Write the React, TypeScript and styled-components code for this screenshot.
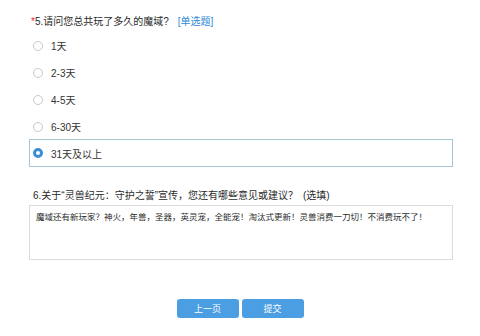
import styled, { createGlobalStyle } from "styled-components"

const GlobalStyle = createGlobalStyle`
    body {
        margin: 0;
        background: #fff;
        font-family: "Liberation Sans", "Noto Sans CJK SC", sans-serif;
        color: #333;
    }
`

const Page = styled.div({
    width: 424,
    paddingLeft: 29,
    paddingTop: 12,
    display: 'flex',
    flexDirection: 'column',
})

const Title = styled.div({
    height: 20,
    lineHeight: '20px',
    fontSize: 10,
    paddingLeft: 2,
    color: '#2b2b2b',
    whiteSpace: 'nowrap',
})

const Star = styled.span({
    color: '#e23',
})

const Kind = styled.span({
    color: '#2f8ad6',
    marginLeft: 9,
})

const Option = styled.label<{ $checked?: boolean }>(({ $checked }) => ({
    display: 'flex',
    alignItems: 'center',
    gap: 8,
    boxSizing: 'border-box',
    height: $checked ? 28 : 27,
    marginTop: $checked ? -1 : 0,
    paddingLeft: 3,
    border: `1px solid ${$checked ? '#a7c3d6' : 'transparent'}`,
    fontSize: 10,
    color: '#333',
}))

const Radio = styled.span<{ $checked?: boolean }>(({ $checked }) => ({
    boxSizing: 'border-box',
    width: 10,
    height: 10,
    borderRadius: '50%',
    border: $checked ? '3px solid #3c8dd6' : '1px solid #c8c8c8',
    background: '#fff',
}))

const Title6 = styled(Title)({
    marginTop: 19,
    height: 19,
    lineHeight: '19px',
    paddingLeft: 4,
})

const Note = styled.span({
    marginLeft: 5,
})

const Answer = styled.div({
    boxSizing: 'border-box',
    height: 55,
    border: '1px solid #dcdcdc',
    padding: '5px 6px',
    fontSize: 8.5,
    lineHeight: '12px',
    color: '#2b2b2b',
    whiteSpace: 'nowrap',
})

const Buttons = styled.div({
    display: 'flex',
    justifyContent: 'center',
    gap: 3,
    marginTop: 39,
    marginLeft: -29,
    width: 480,
})

const Button = styled.button({
    width: 62,
    height: 19,
    border: 'none',
    borderRadius: 3,
    background: '#4b9ee2',
    color: '#fff',
    fontSize: 9,
    fontFamily: '"Liberation Sans", "Noto Sans CJK SC", sans-serif',
    padding: 0,
})

const options = ['1天', '2-3天', '4-5天', '6-30天', '31天及以上']

export default function App() {
    const selected = 4
    return <>
        <GlobalStyle />
        <Page>
            <Title><Star>*</Star>5.请问您总共玩了多久的魔域?<Kind>[单选题]</Kind></Title>
            {options.map((o, i) => (
                <Option key={o} $checked={i === selected}>
                    <Radio $checked={i === selected} />
                    {o}
                </Option>
            ))}
            <Title6>6.关于“灵兽纪元：守护之誓”宣传，您还有哪些意见或建议？<Note>(选填)</Note></Title6>
            <Answer>魔域还有新玩家？神火，年兽，圣器，英灵宠，全能宠！淘汰式更新！灵兽消费一刀切！不消费玩不了！</Answer>
            <Buttons>
                <Button>上一页</Button>
                <Button>提交</Button>
            </Buttons>
        </Page>
    </>
}
